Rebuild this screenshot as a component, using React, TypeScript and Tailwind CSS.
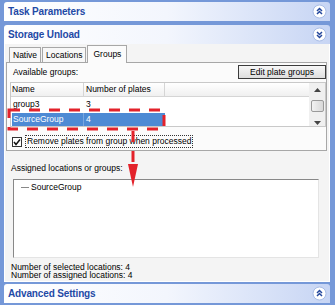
import React from 'react';

const font = { fontFamily: '"Liberation Sans", Arial, sans-serif' };

function Chevrons({ up }: { up: boolean }) {
  return (
    <svg width="15" height="15" viewBox="0 0 15 15">
      <circle cx="7.5" cy="7.5" r="6.5" fill="#ffffff" stroke="#a9bde6" strokeWidth="1" />
      {up ? (
        <g fill="none" stroke="#24479c" strokeWidth="1.5">
          <path d="M5 7 L7.5 4.5 L10 7" />
          <path d="M5 10 L7.5 7.5 L10 10" />
        </g>
      ) : (
        <g fill="none" stroke="#24479c" strokeWidth="1.5">
          <path d="M5 5 L7.5 7.5 L10 5" />
          <path d="M5 8 L7.5 10.5 L10 8" />
        </g>
      )}
    </svg>
  );
}

function PaneHeader({ title, up }: { title: string; up: boolean }) {
  return (
    <div className="h-[19px] flex items-center justify-between pl-[4px] pr-[3px] rounded-t-[3px] bg-gradient-to-r from-white via-[#f3f6fd] to-[#c7d5f4]">
      <span className="text-[10px] font-bold text-[#1f4aa6] tracking-[-0.15px]">{title}</span>
      <Chevrons up={up} />
    </div>
  );
}

export default function App() {
  const groups = [
    { name: 'group3', plates: '3' },
    { name: 'SourceGroup', plates: '4' },
  ];

  return (
    <div style={font} className="relative w-[335px] h-[305px] bg-[#7598d8] pl-[4px] pr-[5px] pt-[2px] text-[8.5px] text-black overflow-hidden">
      <PaneHeader title="Task Parameters" up />
      <div className="h-[4px]" />
      <PaneHeader title="Storage Unload" up={false} />

      {/* Storage Unload body */}
      <div className="h-[238px] bg-[#f4f4f4] border-x border-b border-white pl-[1px] pr-[2px] pt-[1px] flex flex-col">
        {/* tabs */}
        <div className="flex items-end h-[18px] pl-[3px] border-b border-[#a7a7a7]">
          <div className="h-[15px] px-[3px] flex items-center border border-b-0 border-[#a7a7a7] bg-[#f7f7f7] mr-[1px]">Native</div>
          <div className="h-[15px] px-[3px] flex items-center border border-b-0 border-[#a7a7a7] bg-[#f7f7f7]">Locations</div>
          <div className="h-[18px] px-[5px] ml-[1px] flex items-center border border-b-0 border-[#a7a7a7] bg-[#fbfbfb] -mb-[1px] relative">Groups</div>
        </div>

        {/* tab page */}
        <div className="h-[88px] bg-[#fbfbfb] border-x border-b border-[#a7a7a7] flex flex-col">
          <div className="flex items-center justify-between mt-[2px] pl-[6px] h-[14px]">
            <span>Available groups:</span>
            <div className="h-[14px] w-[88px] flex items-center justify-center border border-[#3c3c3c] bg-gradient-to-b from-[#f7f7f7] to-[#dedede]">
              Edit plate groups
            </div>
          </div>

          {/* list view */}
          <div className="mt-[3px] ml-[3px] h-[45px] bg-white border border-[#c9c9c9] flex">
            <div className="flex-1 flex flex-col">
              <div className="flex h-[14px] bg-gradient-to-b from-white to-[#f0f0f0] border-b border-[#d5d5d5]">
                <div className="w-[73px] pl-[1px] flex items-center border-r border-[#d5d5d5]">Name</div>
                <div className="w-[81px] pl-[2px] flex items-center border-r border-[#d5d5d5]">Number of plates</div>
              </div>
              {groups.map((g, i) => (
                <div
                  key={g.name}
                  className={
                    i === 1
                      ? 'flex h-[13px] mt-[2px] ml-[1px] w-[153px] bg-[#4e8ad4] text-white'
                      : 'flex h-[13px] mt-[1px]'
                  }
                >
                  <div className={i === 1 ? 'w-[72px] pl-[1px] flex items-center border-r border-[#7aa7e0]' : 'w-[73px] pl-[2px] flex items-center'}>
                    {g.name}
                  </div>
                  <div className="pl-[2px] flex items-center">{g.plates}</div>
                </div>
              ))}
            </div>
            {/* scrollbar */}
            <div className="w-[16px] bg-[#f0f0f0] flex flex-col items-center pt-[5px]">
              <svg width="7" height="4" viewBox="0 0 7 4">
                <path d="M0 4 L3.5 0 L7 4 Z" fill="#444" />
              </svg>
              <div className="mt-[8px] w-[13px] h-[12px] border border-[#9a9a9a] rounded-[2px] bg-gradient-to-r from-[#f2f2f2] to-[#d8d8d8]" />
              <svg className="mt-[9px]" width="7" height="4" viewBox="0 0 7 4">
                <path d="M0 0 L3.5 4 L7 0 Z" fill="#444" />
              </svg>
            </div>
          </div>

          {/* checkbox */}
          <div className="flex items-center mt-[8px] ml-[5px]">
            <div className="w-[10px] h-[10px] border border-[#333] bg-white flex items-center justify-center">
              <svg width="8" height="8" viewBox="0 0 8 8">
                <path d="M1 4 L3 6.5 L7 1.5" fill="none" stroke="#111" strokeWidth="1.5" />
              </svg>
            </div>
            <div className="ml-[3px] px-[1px] h-[13px] flex items-center border border-dotted border-[#333]">
              Remove plates from group when processed
            </div>
          </div>
        </div>

        {/* assigned */}
        <div className="mt-[11px] ml-[5px]">Assigned locations or groups:</div>
        <div className="mt-[4px] ml-[7px] mr-[8px] h-[79px] bg-white border border-[#888] border-r-[#e4e4e4] border-b-[#e4e4e4] pt-[2px]">
          <div className="flex items-center h-[11px]">
            <div className="ml-[7px] w-[8px] h-px bg-[#888]" />
            <span className="ml-[2px]">SourceGroup</span>
          </div>
        </div>
        <div className="mt-[5px] ml-[5px] leading-[8.5px]">
          <div>Number of selected locations: 4</div>
          <div>Number of assigned locations: 4</div>
        </div>
      </div>

      <div className="h-[2px]" />
      <PaneHeader title="Advanced Settings" up />

      {/* annotation overlay */}
      <svg className="absolute left-0 top-0 pointer-events-none" width="335" height="305" viewBox="0 0 335 305">
        <g stroke="#e3222b" strokeWidth="3" fill="none" strokeDasharray="11 9">
          <rect x="9" y="110" width="155" height="19" />
          <path d="M133 131 L133 164" />
        </g>
        <path d="M128 164 L138 164 L133 187 Z" fill="#e3222b" />
      </svg>
    </div>
  );
}
